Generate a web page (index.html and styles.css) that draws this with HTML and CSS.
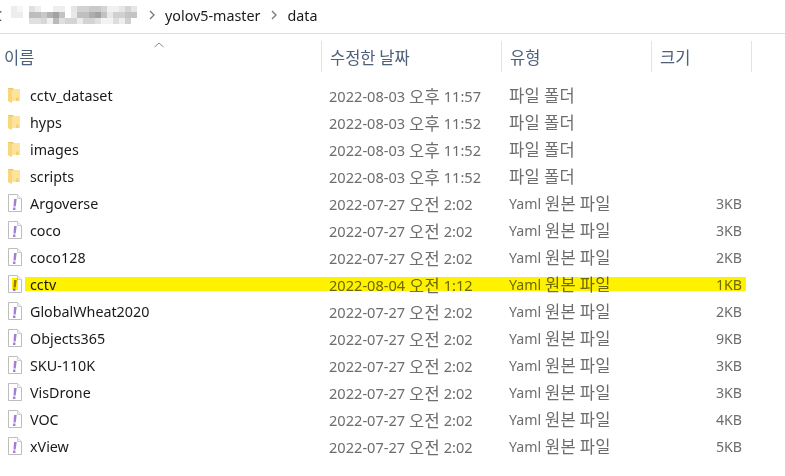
FILE: index.html
```html
<!DOCTYPE html>
<html>
<head>
    <title>data</title>
    <link rel="stylesheet" href="styles.css">
</head>
<body>
    <svg class="defs" width="0" height="0">
        <symbol id="folder" viewBox="0 0 14 18">
            <path d="M0 2h5l1 1.500h5.500V15H1L0 14.500z" fill="#edc767"/>
            <path d="M4 3.500h8V15H4z" fill="#fde49a"/>
            <path d="M0 2.500l4 1V17l-3.500-1.500L0 15z" fill="#f9d67a"/>
            <path d="M8 12l1.500-1 1 1v3H8z" fill="#f2cf73"/>
        </symbol>
        <symbol id="yaml" viewBox="0 0 14 18">
            <path d="M.5.500h9l4 4v13H.5z" fill="#fff" stroke="#bdbdbd"/>
            <path d="M9.500.500v4h4" fill="#f2f2f2" stroke="#cfcfcf"/>
            <path d="M6 5h2.700l-1 7.500H5.500zM5.200 13.500h2.200v2.500H4.900z" fill="#a47ed2"/>
        </symbol>
    </svg>

    <div class="crumbs">
        <span class="crumb-cut">C</span>
        <svg class="blur" width="126" height="18" viewBox="0 0 21 3" shape-rendering="crispEdges">
            <rect x="0" y="0" width="2" height="2" fill="#ededed"/>
            <rect x="1" y="0" width="1" height="1" fill="#f6f6f6"/>
            <rect x="3" y="0" width="1" height="1" fill="#e0e0e0"/>
            <rect x="4" y="0" width="1" height="1" fill="#eeeeee"/>
            <rect x="7" y="0" width="2" height="1" fill="#eeeeee"/>
            <rect x="10" y="0" width="1" height="1" fill="#e6e6e6"/>
            <rect x="11" y="0" width="2" height="1" fill="#d2d2d2"/>
            <rect x="13" y="0" width="2" height="1" fill="#c9c9c9"/>
            <rect x="15" y="0" width="1" height="1" fill="#d4d4d4"/>
            <rect x="16" y="0" width="2" height="1" fill="#f1f1f1"/>
            <rect x="18" y="0" width="1" height="1" fill="#e6e6e6"/>
            <rect x="19" y="0" width="1" height="1" fill="#d4d4d4"/>
            <rect x="20" y="0" width="1" height="1" fill="#e6e6e6"/>
            <rect x="3" y="1" width="2" height="1" fill="#bdbdbd"/>
            <rect x="5" y="1" width="1" height="1" fill="#c8c8c8"/>
            <rect x="6" y="1" width="1" height="1" fill="#b2b2b2"/>
            <rect x="7" y="1" width="1" height="1" fill="#a2a2a2"/>
            <rect x="8" y="1" width="1" height="1" fill="#c2c2c2"/>
            <rect x="10" y="1" width="1" height="1" fill="#e8e8e8"/>
            <rect x="11" y="1" width="2" height="1" fill="#bfbfbf"/>
            <rect x="13" y="1" width="1" height="1" fill="#adadad"/>
            <rect x="14" y="1" width="1" height="1" fill="#a2a2a2"/>
            <rect x="15" y="1" width="1" height="1" fill="#c2c2c2"/>
            <rect x="16" y="1" width="1" height="1" fill="#e8e8e8"/>
            <rect x="17" y="1" width="2" height="1" fill="#d0d0d0"/>
            <rect x="19" y="1" width="2" height="1" fill="#c4c4c4"/>
            <rect x="3" y="2" width="2" height="1" fill="#e0e0e0"/>
            <rect x="5" y="2" width="1" height="1" fill="#d8d8d8"/>
            <rect x="6" y="2" width="1" height="1" fill="#f0f0f0"/>
            <rect x="7" y="2" width="1" height="1" fill="#bababa"/>
            <rect x="8" y="2" width="1" height="1" fill="#e0e0e0"/>
            <rect x="9" y="2" width="2" height="1" fill="#d4d4d4"/>
            <rect x="11" y="2" width="1" height="1" fill="#ebebeb"/>
            <rect x="12" y="2" width="2" height="1" fill="#d4d4d4"/>
            <rect x="14" y="2" width="1" height="1" fill="#e0e0e0"/>
            <rect x="15" y="2" width="2" height="1" fill="#f3f3f3"/>
            <rect x="17" y="2" width="1" height="1" fill="#dddddd"/>
            <rect x="18" y="2" width="1" height="1" fill="#eeeeee"/>
            <rect x="19" y="2" width="1" height="1" fill="#d0d0d0"/>
        </svg>
        <svg class="chev" width="6" height="10" viewBox="0 0 6 10"><path d="M1 1l4 4-4 4" fill="none" stroke="#777" stroke-width="1.300"/></svg>
        <span class="crumb">yolov5-master</span>
        <svg class="chev" width="6" height="10" viewBox="0 0 6 10"><path d="M1 1l4 4-4 4" fill="none" stroke="#777" stroke-width="1.300"/></svg>
        <span class="crumb">data</span>
    </div>

    <div class="head">
        <div class="head-col col-name">이름
            <svg class="sort" width="10" height="6" viewBox="0 0 10 6"><path d="M.5 5L5 1l4.500 4" fill="none" stroke="#8a8a8a"/></svg>
        </div>
        <div class="head-col col-date">수정한 날짜</div>
        <div class="head-col col-type">유형</div>
        <div class="head-col col-size">크기</div>
    </div>

    <div class="list">
        <div class="row"><svg class="icon"><use href="#folder"/></svg><span class="name">cctv_dataset</span><span class="date">2022-08-03 <span class="ko">오후</span> 11:57</span><span class="ko">파일 폴더</span><span class="size"></span></div>
        <div class="row"><svg class="icon"><use href="#folder"/></svg><span class="name">hyps</span><span class="date">2022-08-03 <span class="ko">오후</span> 11:52</span><span class="ko">파일 폴더</span><span class="size"></span></div>
        <div class="row"><svg class="icon"><use href="#folder"/></svg><span class="name">images</span><span class="date">2022-08-03 <span class="ko">오후</span> 11:52</span><span class="ko">파일 폴더</span><span class="size"></span></div>
        <div class="row"><svg class="icon"><use href="#folder"/></svg><span class="name">scripts</span><span class="date">2022-08-03 <span class="ko">오후</span> 11:52</span><span class="ko">파일 폴더</span><span class="size"></span></div>
        <div class="row"><svg class="icon"><use href="#yaml"/></svg><span class="name">Argoverse</span><span class="date">2022-07-27 <span class="ko">오전</span> 2:02</span><span>Yaml <span class="ko">원본 파일</span></span><span class="size">3KB</span></div>
        <div class="row"><svg class="icon"><use href="#yaml"/></svg><span class="name">coco</span><span class="date">2022-07-27 <span class="ko">오전</span> 2:02</span><span>Yaml <span class="ko">원본 파일</span></span><span class="size">3KB</span></div>
        <div class="row"><svg class="icon"><use href="#yaml"/></svg><span class="name">coco128</span><span class="date">2022-07-27 <span class="ko">오전</span> 2:02</span><span>Yaml <span class="ko">원본 파일</span></span><span class="size">2KB</span></div>
        <div class="row marked"><svg class="icon"><use href="#yaml"/></svg><span class="name">cctv</span><span class="date">2022-08-04 <span class="ko">오전</span> 1:12</span><span>Yaml <span class="ko">원본 파일</span></span><span class="size">1KB</span></div>
        <div class="row"><svg class="icon"><use href="#yaml"/></svg><span class="name">GlobalWheat2020</span><span class="date">2022-07-27 <span class="ko">오전</span> 2:02</span><span>Yaml <span class="ko">원본 파일</span></span><span class="size">2KB</span></div>
        <div class="row"><svg class="icon"><use href="#yaml"/></svg><span class="name">Objects365</span><span class="date">2022-07-27 <span class="ko">오전</span> 2:02</span><span>Yaml <span class="ko">원본 파일</span></span><span class="size">9KB</span></div>
        <div class="row"><svg class="icon"><use href="#yaml"/></svg><span class="name">SKU-110K</span><span class="date">2022-07-27 <span class="ko">오전</span> 2:02</span><span>Yaml <span class="ko">원본 파일</span></span><span class="size">3KB</span></div>
        <div class="row"><svg class="icon"><use href="#yaml"/></svg><span class="name">VisDrone</span><span class="date">2022-07-27 <span class="ko">오전</span> 2:02</span><span>Yaml <span class="ko">원본 파일</span></span><span class="size">3KB</span></div>
        <div class="row"><svg class="icon"><use href="#yaml"/></svg><span class="name">VOC</span><span class="date">2022-07-27 <span class="ko">오전</span> 2:02</span><span>Yaml <span class="ko">원본 파일</span></span><span class="size">4KB</span></div>
        <div class="row"><svg class="icon"><use href="#yaml"/></svg><span class="name">xView</span><span class="date">2022-07-27 <span class="ko">오전</span> 2:02</span><span>Yaml <span class="ko">원본 파일</span></span><span class="size">5KB</span></div>
    </div>
</body>
</html>
```

FILE: styles.css
```css
body {
    margin: 0;
    background-color: #fff;
    font-family: "Noto Sans", "Noto Sans CJK KR", sans-serif;
    font-size: 14.2px;
    overflow: hidden;
}

.defs {
    display: block;
}

.ko {
    font-family: "Noto Sans CJK KR", sans-serif;
    font-size: 16.5px;
    letter-spacing: 0.3px;
    line-height: 1;
    vertical-align: -1px;
}

.crumbs {
    display: flex;
    align-items: center;
    box-sizing: border-box;
    height: 34px;
    padding-bottom: 3px;
    border-bottom: 1px solid #dcdcdc;
    color: #1a1a1a;
    font-size: 14.3px;
    overflow: hidden;
}

.crumb-cut {
    width: 11px;
    margin-left: -7px;
    padding-right: 7px;
    flex: none;
}

.blur {
    flex: none;
}

.chev {
    flex: none;
    margin-left: 12px;
    margin-right: 10px;
}

.crumb + .chev {
    margin-left: 11px;
}

.head {
    display: grid;
    grid-template-columns: 322px 180px 150px 100px;
    height: 31px;
    margin-top: 7px;
    color: #4c607a;
    font-family: "Noto Sans CJK KR", sans-serif;
    font-size: 16.5px;
}

.head-col {
    position: relative;
    display: flex;
    align-items: center;
    padding-left: 8px;
    border-right: 1px solid #e3e3e3;
}

.col-name {
    padding-left: 4px;
}

.sort {
    position: absolute;
    left: 154px;
    top: 1px;
}

.list {
    margin-top: 9px;
}

.row {
    position: relative;
    display: grid;
    grid-template-columns: 30px 299px 180px 150px 83px;
    align-items: center;
    height: 27px;
    color: #6d6d6d;
}

.row > span {
    padding-top: 2px;
}

.icon {
    width: 14px;
    height: 18px;
    margin-left: 8px;
}

.name {
    color: #1a1a1a;
    font-size: 14.3px;
}

.date {
    font-size: 14.6px;
}

.size {
    text-align: right;
}

/* hand drawn highlighter over the cctv row */
.marked::before,
.marked::after {
    content: "";
    position: absolute;
    background-color: #fff200;
    mix-blend-mode: multiply;
}

.marked::before {
    left: 12px;
    top: 8px;
    width: 6px;
    height: 12px;
}

.marked::after {
    left: 25px;
    top: 7px;
    width: 721px;
    height: 14px;
}
```
